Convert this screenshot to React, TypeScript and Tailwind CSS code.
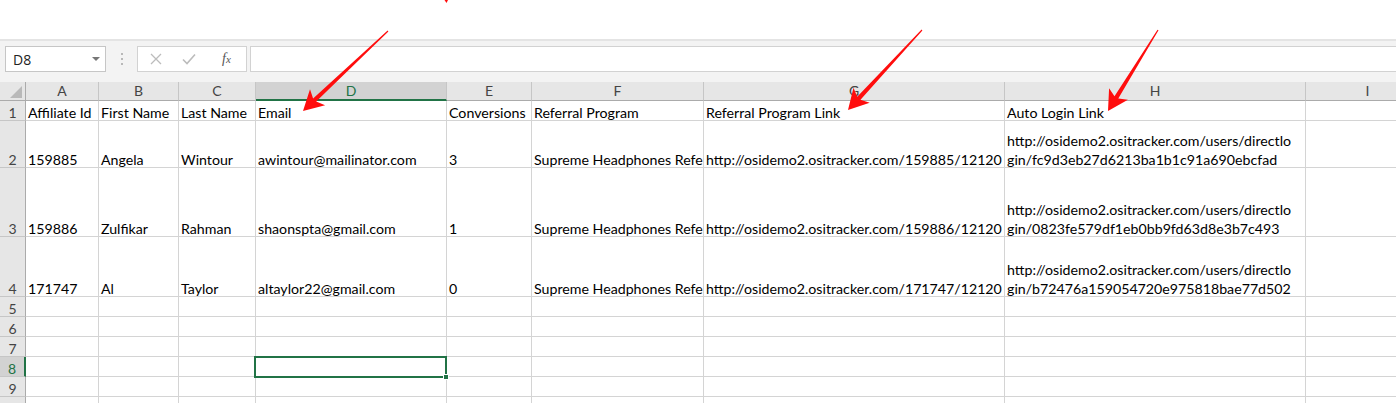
import React from "react";

const COLS = ["A", "B", "C", "D", "E", "F", "G", "H", "I"];
const ROW_H = [20, 47, 69, 60, 20, 20, 20, 20, 20, 20];

type Cell = string | string[];

const DATA: Cell[][] = [
  ["Affiliate Id", "First Name", "Last Name", "Email", "Conversions", "Referral Program", "Referral Program Link", "Auto Login Link", ""],
  [
    "159885", "Angela", "Wintour", "awintour@mailinator.com", "3", "Supreme Headphones Referral Program",
    "http://osidemo2.ositracker.com/159885/12120",
    ["http://osidemo2.ositracker.com/users/directlo", "gin/fc9d3eb27d6213ba1b1c91a690ebcfad"], "",
  ],
  [
    "159886", "Zulfikar", "Rahman", "shaonspta@gmail.com", "1", "Supreme Headphones Referral Program",
    "http://osidemo2.ositracker.com/159886/12120",
    ["http://osidemo2.ositracker.com/users/directlo", "gin/0823fe579df1eb0bb9fd63d8e3b7c493"], "",
  ],
  [
    "171747", "Al", "Taylor", "altaylor22@gmail.com", "0", "Supreme Headphones Referral Program",
    "http://osidemo2.ositracker.com/171747/12120",
    ["http://osidemo2.ositracker.com/users/directlo", "gin/b72476a159054720e975818bae77d502"], "",
  ],
];

const GRID = "grid w-[1430px] grid-cols-[26px_73px_80px_77px_191px_85px_172px_301px_301px_124px]";

// red callout arrow, tail -> tip
function arrowPoints(x1: number, y1: number, x2: number, y2: number) {
  const len = Math.hypot(x2 - x1, y2 - y1);
  const dx = (x2 - x1) / len;
  const dy = (y2 - y1) / len;
  const nx = -dy;
  const ny = dx;
  const L = 20;
  const W = 11;
  const bx = x2 - dx * L;
  const by = y2 - dy * L;
  const jx = x2 - dx * (L - 4);
  const jy = y2 - dy * (L - 4);
  const pts = [
    [x1 + nx * 0.6, y1 + ny * 0.6],
    [jx + nx * 2.2, jy + ny * 2.2],
    [bx + nx * W, by + ny * W],
    [x2, y2],
    [bx - nx * W, by - ny * W],
    [jx - nx * 2.2, jy - ny * 2.2],
    [x1 - nx * 0.6, y1 - ny * 0.6],
  ];
  return pts.map((p) => p.map((v) => v.toFixed(1)).join(",")).join(" ");
}

function Arrows() {
  return (
    <svg className="absolute left-0 top-0 pointer-events-none" width={1396} height={403}>
      <polygon points={arrowPoints(388, 31, 303, 111)} fill="#ff0d0d" />
      <polygon points={arrowPoints(922, 30, 848, 110)} fill="#ff0d0d" />
      <polygon points={arrowPoints(1158, 30, 1108, 111)} fill="#ff0d0d" />
      <polygon points="444.5,0 448,0 446.5,3" fill="#ff0d0d" />
    </svg>
  );
}

export default function App() {
  return (
    <div className="relative w-[1396px] h-[403px] overflow-hidden bg-white text-black" style={{ fontFamily: "Lato, 'Liberation Sans', sans-serif" }}>
      <div className="h-[39px] bg-white" />

      {/* Formula bar */}
      <div className="h-[43px] bg-[#f3f3f3] border-t-2 border-[#e4e4e4] flex items-start pt-[5px]">
        <div className="ml-[5px] w-[101px] h-[26px] bg-white border border-[#c6c6c6] flex items-center justify-between pl-[7px] pr-[5px] text-[14px] text-[#222] font-['Open_Sans',sans-serif]">
          <span>D8</span>
          <span className="w-0 h-0 border-l-[4px] border-r-[4px] border-t-[4px] border-l-transparent border-r-transparent border-t-[#777]" />
        </div>
        <div className="w-[31px] h-[26px] flex flex-col items-center justify-center gap-[3px]">
          <span className="size-[2px] bg-[#b8b8b8]" />
          <span className="size-[2px] bg-[#b8b8b8]" />
          <span className="size-[2px] bg-[#b8b8b8]" />
        </div>
        <div className="w-[110px] h-[26px] bg-white border border-[#d2d2d2] flex items-center pl-[12px] gap-[20px]">
          <svg width="12" height="12" viewBox="0 0 12 12">
            <path d="M1 1 L11 11 M11 1 L1 11" stroke="#bcbcbc" strokeWidth="1.3" />
          </svg>
          <svg width="14" height="12" viewBox="0 0 14 12">
            <path d="M1 6.5 L5 10.5 L13 1.5" stroke="#bcbcbc" strokeWidth="1.6" fill="none" />
          </svg>
          <span className="ml-[6px] text-[14px] italic text-[#555] font-['Liberation_Serif',serif] leading-none">
            f<span className="text-[11px]">x</span>
          </span>
        </div>
        <div className="ml-[3px] flex-1 h-[26px] bg-white border-y border-l border-[#d2d2d2]" />
      </div>

      {/* Column headers */}
      <div className={`${GRID} h-[19px] bg-[#e6e6e6] text-[14px] text-[#444]`}>
        <div className="border-r border-b border-[#ababab] flex items-end justify-end pr-[3px] pb-[2px]">
          <svg width="12" height="12" viewBox="0 0 12 12">
            <polygon points="12,0 12,12 0,12" fill="#b9b9b9" />
          </svg>
        </div>
        {COLS.map((c) =>
          c === "D" ? (
            <div key={c} className="flex items-center justify-center bg-[#d2d2d2] border-r border-[#c6c6c6] border-b-2 border-b-[#217346] text-[#217346] leading-none">
              {c}
            </div>
          ) : (
            <div key={c} className="flex items-center justify-center border-r border-[#c6c6c6] border-b border-b-[#ababab] leading-none">
              {c}
            </div>
          )
        )}
      </div>

      {/* Rows */}
      {ROW_H.map((h, r) => {
        const row = DATA[r] || [];
        const selected = r === 7;
        return (
          <div key={r} className={GRID} style={{ height: h }}>
            <div
              className={`flex items-end justify-center leading-[19px] text-[14px] border-b border-[#c6c6c6] ${
                selected ? "bg-[#d2d2d2] text-[#217346] border-r-2 border-r-[#217346]" : "bg-[#e6e6e6] text-[#444] border-r border-r-[#ababab]"
              }`}
            >
              <span className="translate-y-[2px]">{r + 1}</span>
            </div>
            {COLS.map((c, ci) => {
              const v = row[ci] ?? "";
              return (
                <div
                  key={c}
                  className="flex flex-col justify-end px-[2px] overflow-hidden whitespace-nowrap border-r border-b border-[#d4d4d4] text-[14.2px] leading-[19px]"
                >
                  <div className="flex flex-col translate-y-[2px]">
                    {Array.isArray(v) ? v.map((line, i) => <span key={i}>{line}</span>) : <span>{v}</span>}
                  </div>
                </div>
              );
            })}
          </div>
        );
      })}

      {/* active cell D8 */}
      <div className="absolute left-[254px] top-[356px] w-[193px] h-[22px] border-2 border-[#217346]" />
      <div className="absolute left-[443px] top-[374px] size-[6px] bg-[#217346] border border-white" />

      <Arrows />
    </div>
  );
}
